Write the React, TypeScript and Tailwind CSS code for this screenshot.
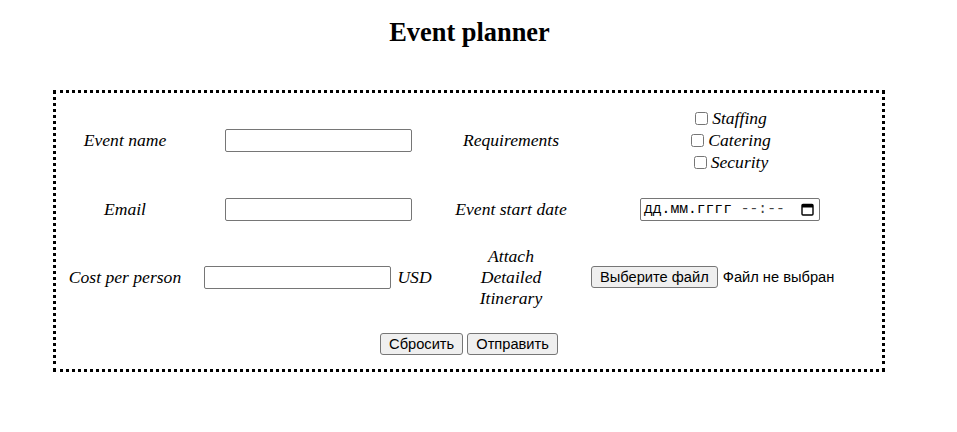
import React from "react";

const serif = "font-['Liberation_Serif',_'Times_New_Roman',_serif]";
const sans = "font-['Liberation_Sans',_Arial,_sans-serif]";

function Label({ children, className = "" }: { children: React.ReactNode; className?: string }) {
  return (
    <div className={`flex items-center justify-center text-center italic text-[17.6px] leading-[21px] text-black ${serif} ${className}`}>
      {children}
    </div>
  );
}

function TextBox() {
  return <input type="text" className="w-[187px] h-[23px] border border-[#767676] rounded-[2px] bg-white px-[2px] outline-none" />;
}

function Btn({ children }: { children: React.ReactNode }) {
  return (
    <button
      type="button"
      className={`h-[22px] px-[8px] border border-[#767676] rounded-[3px] bg-[#efefef] text-[14.67px] leading-[17px] text-black ${sans}`}
    >
      {children}
    </button>
  );
}

function Check({ label }: { label: string }) {
  return (
    <div className="flex items-center justify-center h-[22px]">
      <input type="checkbox" className="w-[13px] h-[13px] m-0 mr-[4px] accent-black" />
      <span className={`italic text-[17.6px] leading-[22px] ${serif}`}>{label}</span>
    </div>
  );
}

function CalendarIcon() {
  return (
    <svg width="13" height="13" viewBox="0 0 13 13" className="block">
      <rect x="1" y="1.5" width="11" height="10.5" rx="1" fill="none" stroke="#000" strokeWidth="1.4" />
      <rect x="1" y="1.5" width="11" height="3" fill="#000" />
    </svg>
  );
}

export default function App() {
  return (
    <div className="w-[939px] bg-white min-h-[432px]">
      <h2 className={`pt-[17px] text-center font-bold text-[26.4px] leading-[30px] text-black ${serif}`}>Event planner</h2>
      <div className="ml-[53px] mt-[43px] w-[832px] border-[3px] border-dotted border-black pt-[13px] pb-[14px]">
        <div className="grid grid-cols-[138px_248px_138px_302px] grid-rows-[68px_24px_66px_22px] gap-y-[23px]">
          {/* row 1 */}
          <Label>Event name</Label>
          <div className="flex items-center justify-center">
            <TextBox />
          </div>
          <Label>Requirements</Label>
          <div className="flex flex-col justify-center">
            <Check label="Staffing" />
            <Check label="Catering" />
            <Check label="Security" />
          </div>

          {/* row 2 */}
          <Label>Email</Label>
          <div className="flex items-center justify-center">
            <TextBox />
          </div>
          <Label>Event start date</Label>
          <div className="flex items-center justify-center pr-[2px]">
            <div className="w-[180px] h-[23px] border border-[#767676] rounded-[2px] bg-white flex items-center pl-[3px] pr-[5px] justify-between">
              <span className="font-['Liberation_Mono',_'Courier_New',_monospace] text-[14.67px] leading-[17px] text-black whitespace-pre">
                дд.мм.гггг<span className="text-[#444]"> --:--</span>
              </span>
              <CalendarIcon />
            </div>
          </div>

          {/* row 3 */}
          <Label>Cost per person</Label>
          <div className="flex items-center justify-center gap-[6px]">
            <TextBox />
            <span className={`italic text-[17.6px] ${serif}`}>USD</span>
          </div>
          <Label>
            Attach
            <br />
            Detailed
            <br />
            Itinerary
          </Label>
          <div className="flex items-center justify-center">
            <div className="w-[280px] flex items-center">
              <Btn>Выберите файл</Btn>
              <span className={`ml-[5px] text-[14.67px] text-black ${sans}`}>Файл не выбран</span>
            </div>
          </div>

          {/* row 4 */}
          <div className="col-span-4 flex items-center justify-center gap-[4px]">
            <Btn>Сбросить</Btn>
            <Btn>Отправить</Btn>
          </div>
        </div>
      </div>
    </div>
  );
}
